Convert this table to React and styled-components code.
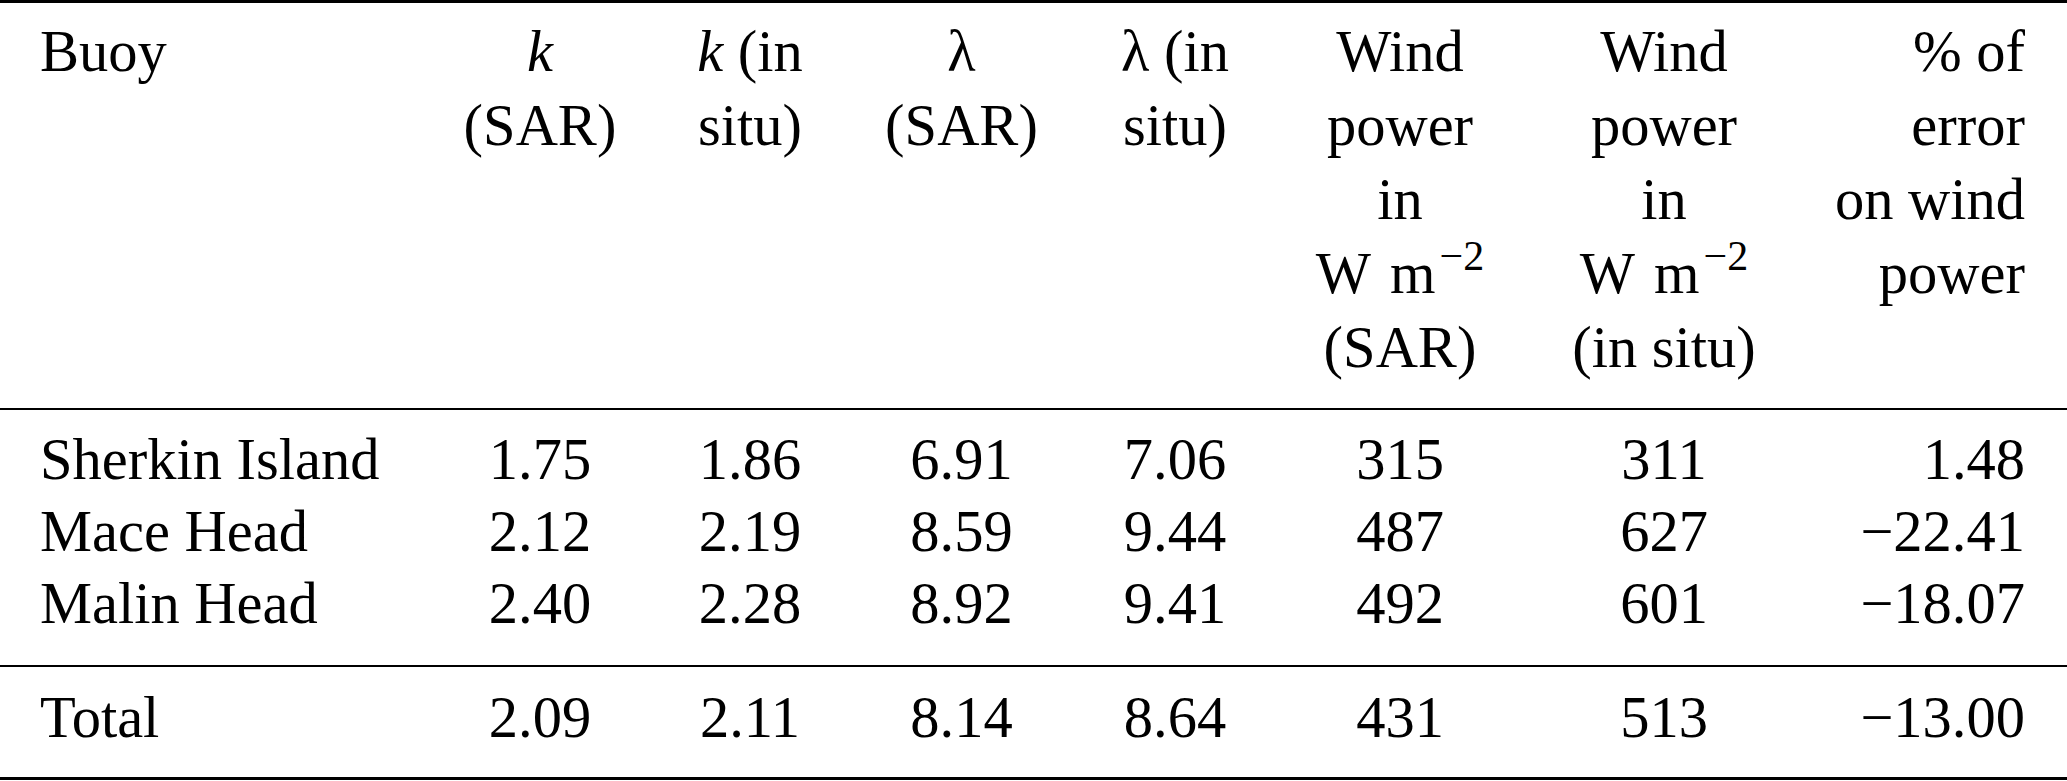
import React from 'react';
import styled, { createGlobalStyle } from 'styled-components';

const GlobalStyle = createGlobalStyle`
  html, body {
    margin: 0;
    padding: 0;
    background: #fff;
  }
`;

const COLS = '435px 210px 210px 213px 214px 236px 292px 257px';

const Table = styled.div`
  width: 2067px;
  font-family: "Liberation Serif", "Times New Roman", serif;
  font-size: 58.5px;
  color: #000;
  border-top: 3px solid #000;
  border-bottom: 3px solid #000;
`;

const Section = styled.div`
  display: grid;
  grid-template-columns: ${COLS};
  line-height: ${p => p.$lh}px;
  padding: ${p => p.$pad};
  border-top: ${p => (p.$rule ? '2px solid #000' : 'none')};
`;

const Cell = styled.div`
  white-space: nowrap;
  text-align: ${p => p.$align || 'center'};
  padding-left: ${p => (p.$align === 'left' ? '40px' : '0')};
  padding-right: ${p => (p.$align === 'right' ? '42px' : '0')};
`;

const Var = styled.i`
  font-style: italic;
`;

const UnitGap = styled.span`
  display: inline-block;
  width: 19px;
`;

const Sup = styled.span`
  font-size: 42px;
  line-height: 0;
  vertical-align: 23px;
  margin-left: 4px;
`;

const Unit = () => (
  <>
    W<UnitGap />m<Sup>−2</Sup>
  </>
);

const rows = [
  ['Sherkin Island', '1.75', '1.86', '6.91', '7.06', '315', '311', '1.48'],
  ['Mace Head', '2.12', '2.19', '8.59', '9.44', '487', '627', '−22.41'],
  ['Malin Head', '2.40', '2.28', '8.92', '9.41', '492', '601', '−18.07'],
];

const total = ['Total', '2.09', '2.11', '8.14', '8.64', '431', '513', '−13.00'];

const alignFor = i => (i === 0 ? 'left' : i === 7 ? 'right' : 'center');

const DataRow = ({ cells }) =>
  cells.map((c, i) => (
    <Cell key={i} $align={alignFor(i)}>
      {c}
    </Cell>
  ));

export default function App() {
  return (
    <>
      <GlobalStyle />
      <Table>
        <Section $lh={74} $pad="12px 0 23px">
          <Cell $align="left">Buoy</Cell>
          <Cell>
            <Var>k</Var>
            <br />
            (SAR)
          </Cell>
          <Cell>
            <Var>k</Var> (in
            <br />
            situ)
          </Cell>
          <Cell>
            λ
            <br />
            (SAR)
          </Cell>
          <Cell>
            λ (in
            <br />
            situ)
          </Cell>
          <Cell>
            Wind
            <br />
            power
            <br />
            in
            <br />
            <Unit />
            <br />
            (SAR)
          </Cell>
          <Cell>
            Wind
            <br />
            power
            <br />
            in
            <br />
            <Unit />
            <br />
            (in situ)
          </Cell>
          <Cell $align="right">
            % of
            <br />
            error
            <br />
            on wind
            <br />
            power
          </Cell>
        </Section>
        <Section $lh={72} $pad="14px 0 25px" $rule>
          {rows.map((r, i) => (
            <DataRow key={i} cells={r} />
          ))}
        </Section>
        <Section $lh={72} $pad="15px 0 23px" $rule>
          <DataRow cells={total} />
        </Section>
      </Table>
    </>
  );
}
